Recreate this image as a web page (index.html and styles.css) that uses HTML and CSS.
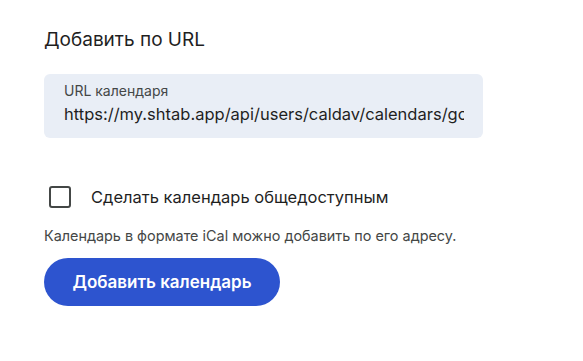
FILE: index.html
```html
<!DOCTYPE html>
<html>
<head>
  <title>Добавить по URL</title>
  <link rel="stylesheet" href="styles.css">
</head>
<body>

<div class="panel">
  <h2 class="title">Добавить по URL</h2>

  <div class="field">
    <label class="field-label" for="url">URL календаря</label>
    <input class="field-input" id="url" type="text" value="https://my.shtab.app/api/users/caldav/calendars/google">
  </div>

  <label class="check">
    <span class="check-box"></span>
    <span class="check-text">Сделать календарь общедоступным</span>
  </label>

  <p class="hint">Календарь в формате iCal можно добавить по его адресу.</p>

  <button class="add-btn">Добавить календарь</button>
</div>

</body>
</html>
```

FILE: styles.css
```css
/* Add calendar by URL */
body {
  margin: 0;
  background-color: white;
  font-family: Inter, Roboto, sans-serif;
  color: #1f1f1f;
}
.panel {
  padding: 28px 0 0 44px;
  width: 439px;
}
.title {
  margin: 0;
  font-size: 19px;
  font-weight: 400;
  line-height: 24px;
}
.field {
  margin-top: 22px;
  height: 64px;
  box-sizing: border-box;
  padding: 9px 19px 0 20px;
  background-color: #e9eef6;
  border-radius: 6px;
}
.field-label {
  display: block;
  font-size: 14px;
  line-height: 16px;
  color: #444746;
}
.field-input {
  display: block;
  width: 100%;
  margin-top: 3px;
  padding: 0;
  border: none;
  outline: none;
  background: transparent;
  font-family: inherit;
  font-size: 16.5px;
  line-height: 24px;
  color: #1f1f1f;
}
.check {
  display: flex;
  align-items: center;
  margin-top: 47px;
  cursor: pointer;
}
.check-box {
  width: 22px;
  height: 22px;
  box-sizing: border-box;
  margin-left: 5px;
  border: 2px solid #444746;
  border-radius: 3px;
}
.check-text {
  margin-left: 20px;
  font-size: 16.5px;
  line-height: 24px;
}
.hint {
  margin: 17px 0 0;
  font-size: 14.4px;
  line-height: 20px;
  color: #444746;
}
.add-btn {
  margin-top: 12px;
  width: 236px;
  height: 48px;
  border: none;
  border-radius: 24px;
  background-color: #2d54cf;
  color: white;
  font-family: inherit;
  font-size: 17px;
  font-weight: 600;
  cursor: pointer;
}
```
